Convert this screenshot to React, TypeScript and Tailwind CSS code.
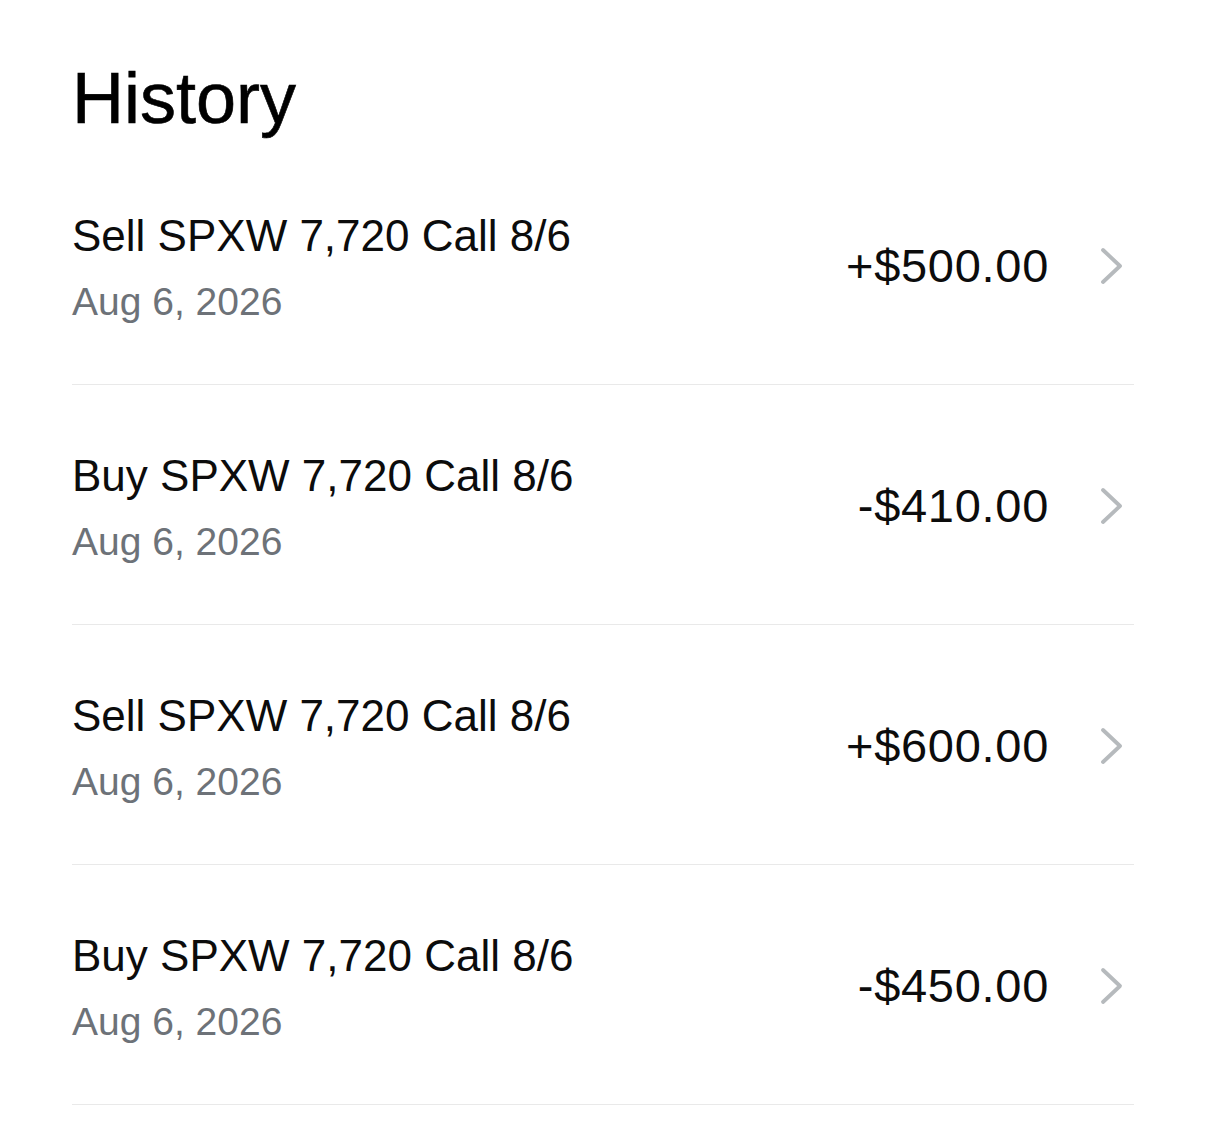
import React from "react";

type Entry = { side: string; date: string; amount: string };

const entries: Entry[] = [
  { side: "Sell", date: "Aug 6, 2026", amount: "+$500.00" },
  { side: "Buy", date: "Aug 6, 2026", amount: "-$410.00" },
  { side: "Sell", date: "Aug 6, 2026", amount: "+$600.00" },
  { side: "Buy", date: "Aug 6, 2026", amount: "-$450.00" },
];

function Chevron() {
  return (
    <svg width="26" height="40" viewBox="0 0 26 40" fill="none" className="shrink-0">
      <polyline
        points="4,4 21,20 4,36"
        stroke="#b6babd"
        strokeWidth="3.8"
        strokeLinecap="round"
        strokeLinejoin="round"
      />
    </svg>
  );
}

function Row({ entry }: { entry: Entry }) {
  return (
    <div className="flex items-center border-b border-[#e9e9e9] pt-[65px] pb-[58px]">
      <div className="flex flex-1 flex-col">
        <div className="text-[44px] leading-[52px] text-[#0c0c0c]">
          {entry.side} SPXW 7,720 Call 8/6
        </div>
        <div className="mt-[16px] text-[39px] leading-[48px] text-[#6d7278]">{entry.date}</div>
      </div>
      <div className="mb-[4px] text-[47px] leading-[56px] tracking-[0.7px] text-[#0c0c0c]">
        {entry.amount}
      </div>
      <div className="mb-[5px] ml-[50px] mr-[9px] flex">
        <Chevron />
      </div>
    </div>
  );
}

export default function App() {
  return (
    <div
      className="min-h-[1127px] w-full bg-white px-[72px]"
      style={{ fontFamily: '"Liberation Sans", Arial, sans-serif' }}
    >
      <h1 className="pt-[62px] text-[72px] leading-[72px] text-black [-webkit-text-stroke:0.6px_black]">
        History
      </h1>
      <div className="mt-[11px] flex flex-col">
        {entries.map((e, i) => (
          <Row key={i} entry={e} />
        ))}
      </div>
    </div>
  );
}
